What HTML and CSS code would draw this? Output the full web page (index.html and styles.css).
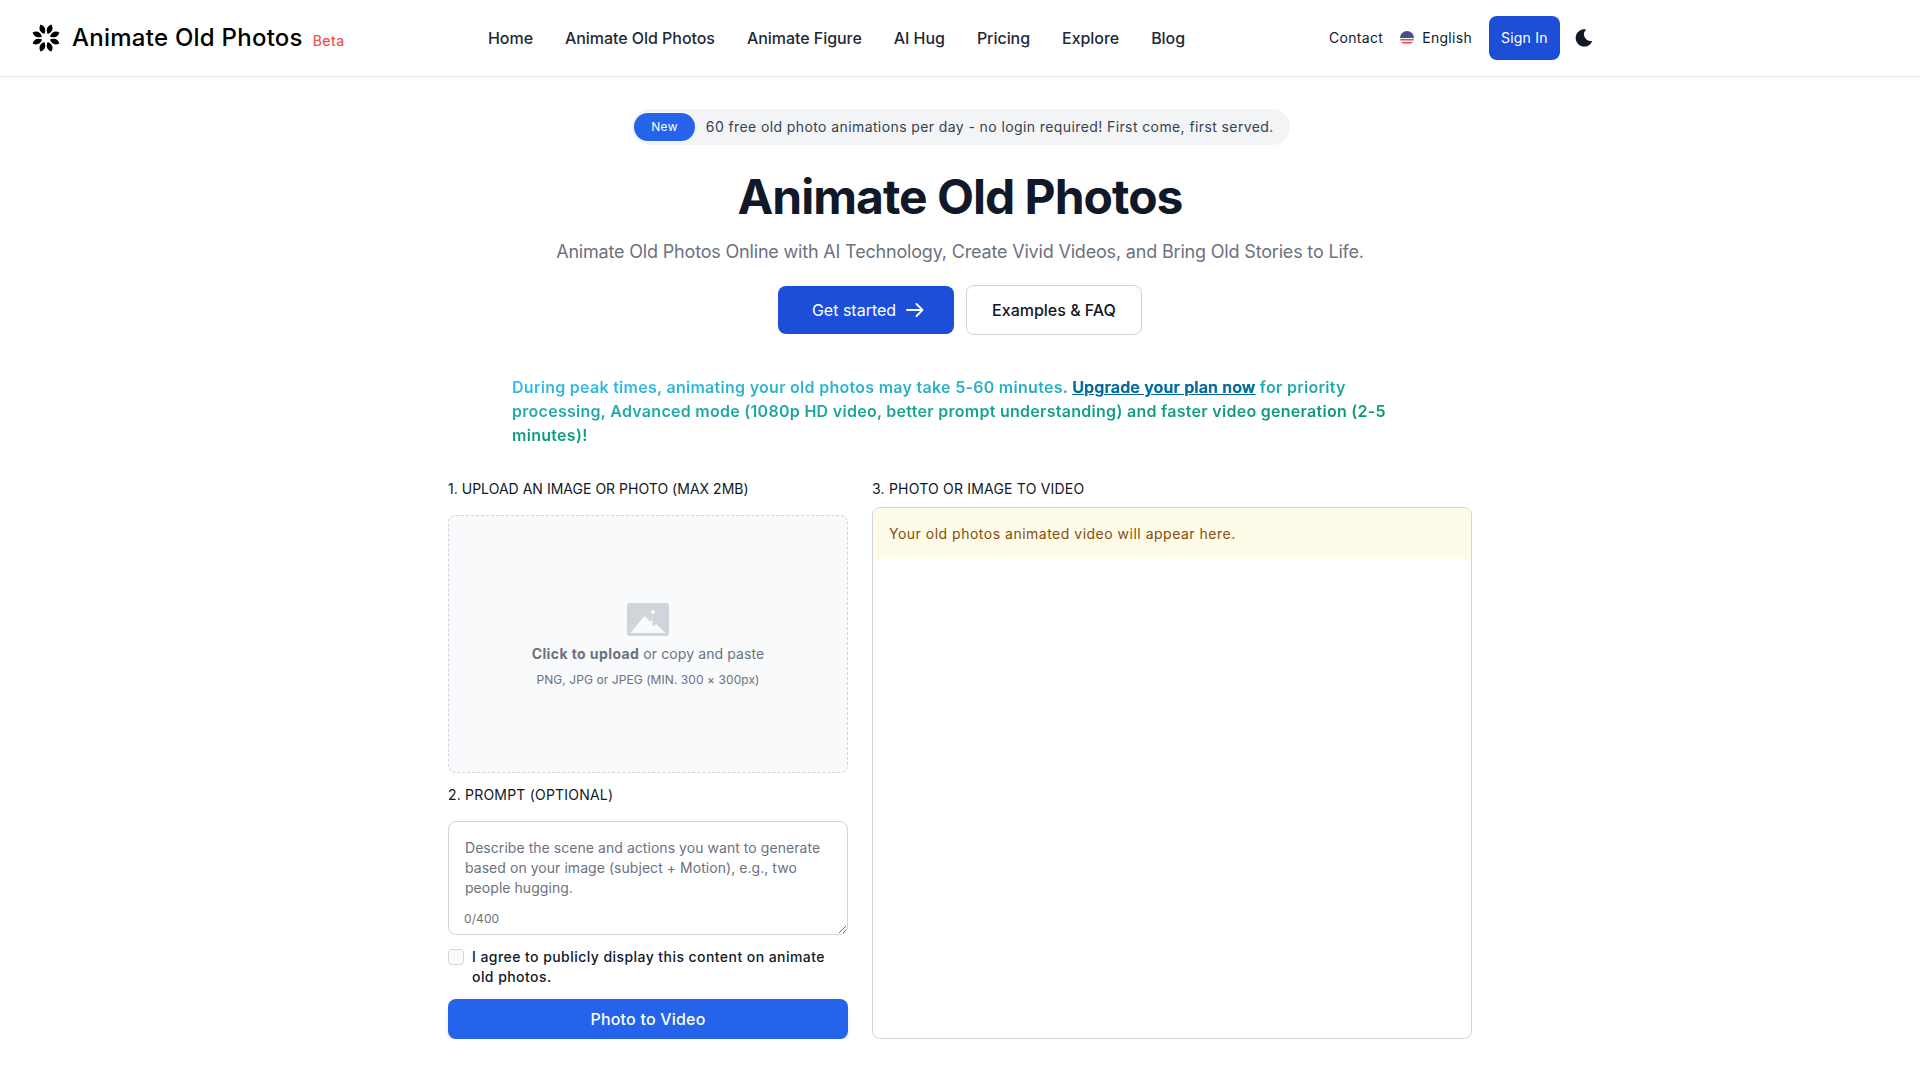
FILE: index.html
```html
<!DOCTYPE html>
<html lang="en">
<head>
    <meta charset="UTF-8" />
    <meta name="viewport" content="width=device-width, initial-scale=1" />
    <title>Animate Old Photos</title>
    <link rel="stylesheet" href="styles.css">
</head>
<body>
<header class="site-header">
    <a class="brand" href="#">
        <svg class="brand-icon" viewBox="0 0 32 32" aria-hidden="true">
            <defs>
                <path id="petal" d="M16 .5c3.400 3 4.200 6.800 0 11-4.200-4.200-3.400-8 0-11z"/>
            </defs>
            <g fill="#000">
                <use href="#petal" transform="rotate(22.500 16 16)"/>
                <use href="#petal" transform="rotate(67.500 16 16)"/>
                <use href="#petal" transform="rotate(112.500 16 16)"/>
                <use href="#petal" transform="rotate(157.500 16 16)"/>
                <use href="#petal" transform="rotate(202.500 16 16)"/>
                <use href="#petal" transform="rotate(247.500 16 16)"/>
                <use href="#petal" transform="rotate(292.500 16 16)"/>
                <use href="#petal" transform="rotate(337.500 16 16)"/>
            </g>
        </svg>
        <span class="brand-name">Animate Old Photos</span>
        <span class="brand-beta">Beta</span>
    </a>
    <nav class="main-nav">
        <a href="#">Home</a>
        <a href="#">Animate Old Photos</a>
        <a href="#">Animate Figure</a>
        <a href="#">AI Hug</a>
        <a href="#">Pricing</a>
        <a href="#">Explore</a>
        <a href="#">Blog</a>
    </nav>
    <div class="header-actions">
        <a class="action-link" href="#">Contact</a>
        <a class="action-link lang" href="#">
            <svg class="flag" viewBox="0 0 14 14" aria-hidden="true">
                <clipPath id="flagClip"><circle cx="7" cy="7" r="7"/></clipPath>
                <g clip-path="url(#flagClip)">
                    <rect width="14" height="14" fill="#f4f4f6"/>
                    <rect y="8" width="14" height="1.500" fill="#d9505f"/>
                    <rect y="11" width="14" height="1.500" fill="#d9505f"/>
                    <rect width="14" height="7" fill="#4a4f85"/>
                </g>
            </svg>
            English
        </a>
        <a class="btn-signin" href="#">Sign In</a>
        <svg class="moon" viewBox="0 0 20 20" aria-hidden="true">
            <path fill="#111827" d="M12.200 1.600A8.600 8.600 0 1 0 18.400 12.800 6.600 6.600 0 0 1 12.200 1.600z"/>
        </svg>
    </div>
</header>

<main class="page">
    <section class="hero">
        <a class="notice-pill" href="#">
            <span class="notice-tag">New</span>
            <span class="notice-text">60 free old photo animations per day - no login required! First come, first served.</span>
        </a>
        <h1>Animate Old Photos</h1>
        <p class="hero-sub">Animate Old Photos Online with AI Technology, Create Vivid Videos, and Bring Old Stories to Life.</p>
        <div class="hero-buttons">
            <a class="btn btn-primary" href="#">
                Get started
                <svg class="arrow" viewBox="0 0 18 14" aria-hidden="true">
                    <path d="M1 7h15.500M10.500 1l6 6-6 6" fill="none" stroke="#fff" stroke-width="1.800" stroke-linecap="round" stroke-linejoin="round"/>
                </svg>
            </a>
            <a class="btn btn-outline" href="#">Examples &amp; FAQ</a>
        </div>
    </section>

    <p class="peak-note">During peak times, animating your old photos may take 5-60 minutes. <a href="#">Upgrade your plan now</a> for priority processing, Advanced mode (1080p HD video, better prompt understanding) and faster video generation (2-5 minutes)!</p>

    <section class="workspace">
        <div class="col-left">
            <label class="field-label label-upload">1. Upload an image or photo (max 2MB)</label>
            <div class="dropzone">
                <svg class="drop-icon" viewBox="0 0 42 33" aria-hidden="true">
                    <path fill="#d1d5db" d="M3 0h36a3 3 0 0 1 3 3v27a3 3 0 0 1-3 3H3a3 3 0 0 1-3-3V3a3 3 0 0 1 3-3z"/>
                    <path fill="#f9fafc" d="M3.500 30 16 14.500c1-1.200 2.400-1.200 3.400 0l3.600 4.300 1.600-1.700 1.500 1.600-1.500 2 2.200 2.500 2.300-2.400L38.500 30z"/>
                    <circle cx="26" cy="9" r="2" fill="#f9fafc"/>
                </svg>
                <p class="drop-title"><strong>Click to upload</strong> or copy and paste</p>
                <p class="drop-hint">PNG, JPG or JPEG (MIN. 300 × 300px)</p>
            </div>

            <label class="field-label prompt-label">2. Prompt (optional)</label>
            <div class="prompt-box">
                <textarea class="prompt-input" rows="3" placeholder="Describe the scene and actions you want to generate based on your image (subject + Motion), e.g., two people hugging."></textarea>
                <span class="prompt-count">0/400</span>
            </div>

            <label class="agree">
                <input type="checkbox" />
                <span>I agree to publicly display this content on animate old photos.</span>
            </label>

            <button class="btn-submit" type="button">Photo to Video</button>
        </div>

        <div class="col-right">
            <label class="field-label label-video">3. Photo or image to video</label>
            <div class="result-box">
                <div class="result-alert">Your old photos animated video will appear here.</div>
            </div>
        </div>
    </section>
</main>
</body>
</html>
```

FILE: styles.css
```css
/* Reset et base */
* {
    box-sizing: border-box;
}
body {
    margin: 0;
    font-family: Inter, "Noto Sans", sans-serif;
    background: #fff;
    color: #111827;
}
a {
    color: inherit;
    text-decoration: none;
}

/* Header */
.site-header {
    display: flex;
    align-items: center;
    height: 77px;
    padding: 0 0 1px 31px;
    border-bottom: 1px solid #e5e7eb;
}
.brand {
    display: flex;
    align-items: center;
    width: 457px;
    flex: none;
}
.brand-icon {
    width: 30px;
    height: 30px;
    margin-right: 11px;
}
.brand-name {
    font-size: 24px;
    font-weight: 500;
    letter-spacing: 0.25px;
    color: #000;
}
.brand-beta {
    margin: 5px 0 0 10px;
    font-size: 14px;
    font-weight: 500;
    letter-spacing: 0.4px;
    color: #ef5350;
}
.main-nav {
    display: flex;
    gap: 32px;
    font-size: 16px;
    font-weight: 500;
    letter-spacing: -0.05px;
    color: #1f2937;
}
.header-actions {
    display: flex;
    align-items: center;
    margin-left: 144px;
}
.action-link {
    font-size: 14px;
    font-weight: 400;
    letter-spacing: 0.3px;
    color: #111827;
}
.lang {
    display: flex;
    align-items: center;
    gap: 8px;
    margin-left: 17px;
}
.flag {
    width: 14px;
    height: 14px;
}
.btn-signin {
    margin-left: 17px;
    padding: 0 12px;
    height: 44px;
    line-height: 44px;
    font-size: 14px;
    font-weight: 400;
    letter-spacing: 0.2px;
    color: #fff;
    background: #1d4ed8;
    border-radius: 8px;
}
.moon {
    width: 20px;
    height: 20px;
    margin-left: 14px;
}

/* Hero */
.hero {
    display: flex;
    flex-direction: column;
    align-items: center;
    padding-top: 32px;
}
.notice-pill {
    display: flex;
    align-items: center;
    height: 36px;
    margin-left: 2px;
    padding: 0 16px 0 2px;
    background: #f3f4f6;
    border-radius: 18px;
}
.notice-tag {
    padding: 0 17px;
    height: 28px;
    line-height: 28px;
    margin-right: 11px;
    font-size: 12px;
    letter-spacing: 0.3px;
    color: #fff;
    background: #2563eb;
    border-radius: 14px;
}
.notice-text {
    padding-bottom: 2px;
    font-size: 14px;
    color: #374151;
    letter-spacing: 0.4px;
}
h1 {
    margin: 22px 0 0;
    font-size: 48px;
    line-height: 60px;
    font-weight: 700;
    color: #111827;
    letter-spacing: -1px;
}
.hero-sub {
    margin: 11px 0 0;
    font-size: 18px;
    line-height: 28px;
    letter-spacing: -0.18px;
    color: #6b7280;
}
.hero-buttons {
    display: flex;
    align-items: center;
    gap: 12px;
    margin-top: 19px;
}
.btn {
    display: flex;
    align-items: center;
    justify-content: center;
    width: 176px;
    height: 48px;
    font-size: 16px;
    font-weight: 500;
    border-radius: 8px;
}
.btn-primary {
    gap: 10px;
    padding-left: 4px;
    font-weight: 400;
    color: #fff;
    background: #1d4ed8;
}
.arrow {
    width: 18px;
    height: 14px;
}
.btn-outline {
    height: 50px;
    color: #111827;
    background: #fff;
    border: 1px solid #d1d5db;
}

/* Message */
.peak-note {
    width: 896px;
    margin: 40px auto 0;
    font-size: 16px;
    line-height: 24px;
    font-weight: 600;
    letter-spacing: 0.28px;
    color: transparent;
    background: linear-gradient(178deg, #38bdf8 5%, #059669 70%);
    background-clip: text;
    -webkit-background-clip: text;
}
.peak-note a {
    color: #0369a1;
    letter-spacing: 0.18px;
    text-decoration: underline;
}

/* Formulaire */
.workspace {
    display: grid;
    grid-template-columns: 400px 600px;
    gap: 24px;
    width: 1024px;
    margin: 32px auto 0;
}
.col-left,
.col-right {
    display: flex;
    flex-direction: column;
}
.field-label {
    display: block;
    font-size: 14px;
    line-height: 20px;
    font-weight: 400;
    letter-spacing: 0.2px;
    color: #111827;
    text-transform: uppercase;
}
.label-upload {
    letter-spacing: 0.02px;
}
.dropzone {
    display: flex;
    flex-direction: column;
    align-items: center;
    justify-content: center;
    height: 258px;
    margin-top: 16px;
    padding-top: 3px;
    background: #f9fafc;
    border: 1px dashed #d1d5db;
    border-radius: 8px;
}
.drop-icon {
    width: 42px;
    height: 33px;
}
.drop-title {
    margin: 8px 0 0;
    font-size: 14px;
    line-height: 20px;
    letter-spacing: 0.1px;
    color: #6b7280;
}
.drop-title strong {
    letter-spacing: 0.41px;
}
.drop-hint {
    margin: 8px 0 0;
    font-size: 12px;
    line-height: 16px;
    letter-spacing: 0.07px;
    color: #6b7280;
}
.prompt-label {
    margin-top: 12px;
}
.prompt-box {
    position: relative;
    margin-top: 16px;
}
.prompt-input {
    display: block;
    width: 100%;
    height: 114px;
    padding: 16px;
    font-family: inherit;
    font-size: 14px;
    line-height: 20px;
    letter-spacing: 0.05px;
    color: #111827;
    background: #fff;
    border: 1px solid #d1d5db;
    border-radius: 8px;
    outline: none;
}
.prompt-input::placeholder {
    color: #6b7280;
    opacity: 1;
}
.prompt-count {
    position: absolute;
    left: 16px;
    bottom: 9px;
    font-size: 12px;
    letter-spacing: 0.1px;
    color: #6b7280;
}
.agree {
    display: flex;
    align-items: flex-start;
    gap: 8px;
    margin-top: 12px;
    font-size: 14px;
    line-height: 20px;
    font-weight: 500;
    letter-spacing: 0.44px;
    color: #111827;
}
.agree input {
    appearance: none;
    -webkit-appearance: none;
    flex: none;
    width: 16px;
    height: 16px;
    margin: 2px 0 0;
    background: #f9fafb;
    border: 1px solid #d1d5db;
    border-radius: 4px;
}
.btn-submit {
    height: 40px;
    margin-top: 12px;
    font-family: inherit;
    font-size: 16px;
    font-weight: 500;
    letter-spacing: 0.2px;
    color: #fff;
    background: #2563eb;
    border: none;
    border-radius: 8px;
    box-shadow: 0 4px 6px -1px rgba(0,0,0,0.1), 0 2px 4px -2px rgba(0,0,0,0.1);
}
.result-box {
    flex: 1;
    margin-top: 8px;
    border: 1px solid #d1d5db;
    border-radius: 8px;
    overflow: hidden;
}
.result-alert {
    height: 51px;
    padding: 16px 16px 15px;
    font-size: 14px;
    line-height: 20px;
    font-weight: 400;
    letter-spacing: 0.5px;
    color: #854d0e;
    background: #fefce8;
}
```
